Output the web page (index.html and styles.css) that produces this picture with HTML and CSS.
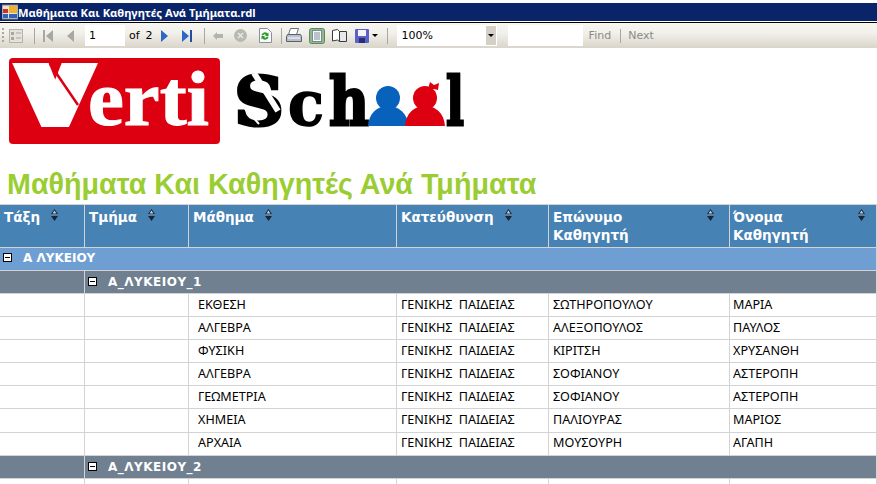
FILE: index.html
```html
<!DOCTYPE html>
<html lang="en">
<head>
    <meta charset="UTF-8">
    <title>Μαθήματα Και Καθηγητές Ανά Τμήματα</title>
    <link rel="stylesheet" href="styles.css">
</head>
<body>
<!-- window title -->
<div class="titlebar">
    <svg class="appicon" width="16" height="16" viewBox="0 0 16 16">
        <rect x="0" y="1" width="16" height="14" fill="#e8e4d8" stroke="#7a7a7a"/>
        <rect x="1" y="5" width="5" height="4" fill="#d03020"/>
        <rect x="1" y="10" width="5" height="4" fill="#3060c0"/>
        <rect x="7" y="2" width="8" height="7" fill="#f0b030"/>
        <rect x="7" y="10" width="8" height="4" fill="#3060c0"/>
    </svg>
    <span>Μαθήματα Και Καθηγητές Ανά Τμήματα.rdl</span>
</div>

<!-- report viewer toolbar -->
<div class="toolbar">
    <span class="grip"></span>
    <svg class="tool t-params" width="14" height="14" viewBox="0 0 14 14">
        <rect x="0.5" y="0.5" width="13" height="13" fill="#e4e2da" stroke="#b5b3a8"/>
        <rect x="2" y="3" width="3" height="3" fill="#a9a79c"/>
        <rect x="2" y="8" width="3" height="3" fill="#a9a79c"/>
        <path d="M7 4h5M7 9h5" stroke="#a9a79c"/>
    </svg>
    <span class="sep s1"></span>
    <svg class="tool t-first" width="10" height="12" viewBox="0 0 10 12"><rect x="0" y="0" width="2" height="12" fill="#a8a8a2"/><path d="M10 0v12L3 6z" fill="#a8a8a2"/></svg>
    <svg class="tool t-prev" width="9" height="12" viewBox="0 0 9 12"><path d="M8 0v12L1 6z" fill="#a8a8a2"/></svg>
    <span class="pagebox">1</span>
    <span class="of">of</span>
    <span class="total">2</span>
    <svg class="tool t-next" width="8" height="12" viewBox="0 0 8 12"><path d="M0 0v12l7-6z" fill="#2f68c4"/></svg>
    <svg class="tool t-last" width="10" height="12" viewBox="0 0 10 12"><path d="M0 0v12l7-6z" fill="#2f68c4"/><rect x="8" y="0" width="2" height="12" fill="#1f4fa0"/></svg>
    <span class="sep s2"></span>
    <svg class="tool t-back" width="10" height="8" viewBox="0 0 10 8"><path d="M0 4l4-4v2h6v4H4v2z" fill="#b4b4ae"/></svg>
    <svg class="tool t-stop" width="13" height="13" viewBox="0 0 13 13"><circle cx="6.5" cy="6.5" r="6.5" fill="#b9b9b3"/><path d="M4 4l5 5M9 4l-5 5" stroke="#e8e8e2" stroke-width="1.5"/></svg>
    <svg class="tool t-refresh" width="14" height="15" viewBox="0 0 14 15">
        <path d="M1.500.5h8l4 4v10h-12z" fill="#fbfbf6" stroke="#8290a8"/>
        <path d="M3.500 7a3.500 3.500 0 0 1 6-1.500l1-1v3.500H7l1-1a2 2 0 0 0-3 .5zM10.500 9a3.500 3.500 0 0 1-6 1.500l-1 1V8H7l-1 1a2 2 0 0 0 3-.5z" fill="#2c9a2c"/>
    </svg>
    <span class="sep s3"></span>
    <svg class="tool t-print" width="16" height="15" viewBox="0 0 16 15">
        <path d="M4.500.5h8l-2 6h-8z" fill="#fff" stroke="#68707c"/>
        <path d="M1.500 6.500h13l1 2v5h-15v-5z" fill="#b8c0cc" stroke="#58606c"/>
        <path d="M2 10h12" stroke="#fff"/>
    </svg>
    <svg class="tool t-layout" width="16" height="16" viewBox="0 0 16 16">
        <rect x="0.500" y="0.500" width="15" height="15" rx="2" fill="#8fb98a" stroke="#5c8a5c"/>
        <rect x="3.500" y="2.500" width="9" height="11" fill="#fafafa" stroke="#7a8a9a"/>
        <path d="M5 5h6M5 7h6M5 9h6M5 11h6" stroke="#7a8a9a"/>
    </svg>
    <svg class="tool t-setup" width="15" height="13" viewBox="0 0 15 13">
        <path d="M.5 1.500l5-1 2 2v10l-2-1.500-5 1z" fill="#fff" stroke="#3a3a3a"/>
        <path d="M7.500 2.500h7v10h-7z" fill="#e6e8ec" stroke="#3a3a3a"/>
    </svg>
    <svg class="tool t-save" width="14" height="14" viewBox="0 0 14 14">
        <rect x="0" y="0" width="14" height="14" rx="1" fill="#5a62c8"/>
        <rect x="3" y="1" width="8" height="6" fill="#f4f4fa"/>
        <rect x="4" y="9" width="6" height="5" fill="#2a2e70"/>
    </svg>
    <span class="caret"></span>
    <span class="sep s4"></span>
    <div class="zoombox"><span class="zoomval">100%</span><span class="zoomdrop"><span class="caret"></span></span></div>
    <span class="findbox"></span>
    <span class="find">Find</span>
    <span class="sep s5"></span>
    <span class="find">Next</span>
</div>

<!-- report body -->
<div class="logos">
    <svg class="logo-verti" width="211" height="87" viewBox="0 0 211 87">
        <rect x="0" y="0" width="211" height="86" rx="4" fill="#dc0011"/>
        <text class="logo-v" transform="translate(46 60) scale(1.38 1.12)" text-anchor="middle">V</text>
        <line x1="41" y1="6" x2="69" y2="47" stroke="#dc0011" stroke-width="2.5"/>
        <text class="logo-w" x="79" y="67" textLength="121" lengthAdjust="spacingAndGlyphs">erti</text>
    </svg>
    <svg class="logo-school" width="230" height="56" viewBox="0 0 230 56">
        <text class="logo-k" x="-2" y="52" textLength="50" lengthAdjust="spacingAndGlyphs">S</text>
        <line x1="18" y1="0" x2="42" y2="38" stroke="#fff" stroke-width="6"/>
        <line x1="1" y1="27" x2="23" y2="51" stroke="#fff" stroke-width="2"/>
        <text class="logo-s" x="52" y="52" textLength="36" lengthAdjust="spacingAndGlyphs">c</text>
        <text class="logo-k" x="93" y="52" textLength="40" lengthAdjust="spacingAndGlyphs">h</text>
        <circle cx="152" cy="25" r="12" fill="#0861bb"/>
        <path d="M132 53c1-13 9-20 20-20s19 7 21 20z" fill="#0861bb"/>
        <circle cx="189" cy="25" r="12" fill="#dc0011"/>
        <path d="M169 53c1-13 9-20 20-20s19 7 20 20z" fill="#dc0011"/>
        <path d="M192 16l2-7 4 3 5-2-1 7-4-1z" fill="#dc0011"/>
        <text class="logo-k" x="210" y="52" textLength="18" lengthAdjust="spacingAndGlyphs">l</text>
    </svg>
</div>

<h1 class="report-title">Μαθήματα Και Καθηγητές Ανά Τμήματα</h1>

<table class="tg">
    <colgroup>
        <col class="c1"><col class="c2"><col class="c3"><col class="c4"><col class="c5"><col class="c6">
    </colgroup>
    <thead>
    <tr>
        <th><div class="hd"><span>Τάξη</span><svg class="sort" width="7" height="12" viewBox="0 0 9 12" preserveAspectRatio="none"><path d="M4.500 0L9 5H0zM4.500 12L0 7h9z" fill="#1c2530"/><path d="M4.500 1.500L7 4.500H2z" fill="#c8d0d8"/></svg></div></th>
        <th><div class="hd"><span>Τμήμα</span><svg class="sort" width="7" height="12" viewBox="0 0 9 12" preserveAspectRatio="none"><path d="M4.500 0L9 5H0zM4.500 12L0 7h9z" fill="#1c2530"/><path d="M4.500 1.500L7 4.500H2z" fill="#c8d0d8"/></svg></div></th>
        <th><div class="hd"><span>Μάθημα</span><svg class="sort" width="7" height="12" viewBox="0 0 9 12" preserveAspectRatio="none"><path d="M4.500 0L9 5H0zM4.500 12L0 7h9z" fill="#1c2530"/><path d="M4.500 1.500L7 4.500H2z" fill="#c8d0d8"/></svg></div></th>
        <th><div class="hd"><span>Κατεύθυνση</span><svg class="sort" width="7" height="12" viewBox="0 0 9 12" preserveAspectRatio="none"><path d="M4.500 0L9 5H0zM4.500 12L0 7h9z" fill="#1c2530"/><path d="M4.500 1.500L7 4.500H2z" fill="#c8d0d8"/></svg></div></th>
        <th class="th-wide"><div class="hd hd-wide"><span>Επώνυμο<br>Καθηγητή</span><svg class="sort" width="7" height="12" viewBox="0 0 9 12" preserveAspectRatio="none"><path d="M4.500 0L9 5H0zM4.500 12L0 7h9z" fill="#1c2530"/><path d="M4.500 1.500L7 4.500H2z" fill="#c8d0d8"/></svg></div></th>
        <th class="th-last"><div class="hd hd-wide"><span>Όνομα<br>Καθηγητή</span><svg class="sort" width="7" height="12" viewBox="0 0 9 12" preserveAspectRatio="none"><path d="M4.500 0L9 5H0zM4.500 12L0 7h9z" fill="#1c2530"/><path d="M4.500 1.500L7 4.500H2z" fill="#c8d0d8"/></svg></div></th>
    </tr>
    </thead>
    <tbody>
    <tr class="grp1"><td colspan="6"><span class="tog"></span>Α ΛΥΚΕΙΟΥ</td></tr>
    <tr class="grp2"><td></td><td colspan="5"><span class="tog"></span>Α_ΛΥΚΕΙΟΥ_1</td></tr>
    <tr><td></td><td></td><td class="subj">ΕΚΘΕΣΗ</td><td>ΓΕΝΙΚΗΣ ΠΑΙΔΕΙΑΣ</td><td>ΣΩΤΗΡΟΠΟΥΛΟΥ</td><td>ΜΑΡΙΑ</td></tr>
    <tr><td></td><td></td><td class="subj">ΑΛΓΕΒΡΑ</td><td>ΓΕΝΙΚΗΣ ΠΑΙΔΕΙΑΣ</td><td>ΑΛΕΞΟΠΟΥΛΟΣ</td><td>ΠΑΥΛΟΣ</td></tr>
    <tr><td></td><td></td><td class="subj">ΦΥΣΙΚΗ</td><td>ΓΕΝΙΚΗΣ ΠΑΙΔΕΙΑΣ</td><td>ΚΙΡΙΤΣΗ</td><td>ΧΡΥΣΑΝΘΗ</td></tr>
    <tr><td></td><td></td><td class="subj">ΑΛΓΕΒΡΑ</td><td>ΓΕΝΙΚΗΣ ΠΑΙΔΕΙΑΣ</td><td>ΣΟΦΙΑΝΟΥ</td><td>ΑΣΤΕΡΟΠΗ</td></tr>
    <tr><td></td><td></td><td class="subj">ΓΕΩΜΕΤΡΙΑ</td><td>ΓΕΝΙΚΗΣ ΠΑΙΔΕΙΑΣ</td><td>ΣΟΦΙΑΝΟΥ</td><td>ΑΣΤΕΡΟΠΗ</td></tr>
    <tr class="row-tall"><td></td><td></td><td class="subj">ΧΗΜΕΙΑ</td><td>ΓΕΝΙΚΗΣ ΠΑΙΔΕΙΑΣ</td><td>ΠΑΛΙΟΥΡΑΣ</td><td>ΜΑΡΙΟΣ</td></tr>
    <tr class="row-up"><td></td><td></td><td class="subj">ΑΡΧΑΙΑ</td><td>ΓΕΝΙΚΗΣ ΠΑΙΔΕΙΑΣ</td><td>ΜΟΥΣΟΥΡΗ</td><td>ΑΓΑΠΗ</td></tr>
    <tr class="grp2"><td></td><td colspan="5"><span class="tog"></span>Α_ΛΥΚΕΙΟΥ_2</td></tr>
    <tr><td></td><td></td><td></td><td></td><td></td><td></td></tr>
    </tbody>
</table>
</body>
</html>
```

FILE: styles.css
```css
html, body {margin:0;padding:0;height:484px;overflow:hidden;background:#fff;}
body {font-family:"DejaVu Sans", sans-serif;}

/* title bar */
.titlebar {height:18px;margin-top:3px;background:#0a246a;color:#fff;display:flex;align-items:center;
    font-family:"Noto Sans", sans-serif;font-weight:bold;font-size:11.2px;gap:0;padding-left:2px;}
.titlebar span {white-space:nowrap;}

/* toolbar */
.toolbar {height:25px;margin-top:1px;border-top:1px solid #000;background:linear-gradient(#f7f6f2,#f2f0ea 40%,#d9d5cb);
    display:flex;align-items:center;font-size:11px;color:#000;}
.grip {width:2px;height:16px;margin-left:2px;background:repeating-linear-gradient(#a9a69a 0 2px,transparent 2px 4px);}
.tool {flex:none;}
.t-params {margin-left:5px;}
.sep {width:1px;height:16px;background:#a9a69a;flex:none;}
.s1 {margin-left:11px;}
.t-first {margin-left:8px;}
.t-prev {margin-left:13px;}
.pagebox {width:36px;height:21px;margin-left:10px;padding-left:4px;background:#fff;line-height:21px;font-size:11px;}
.of {margin-left:4px;}
.total {margin-left:6px;}
.t-next {margin-left:8px;}
.t-last {margin-left:13px;}
.s2 {margin-left:12px;}
.t-back {margin-left:8px;}
.t-stop {margin-left:11px;}
.t-refresh {margin-left:11px;}
.s3 {margin-left:9px;}
.t-print {margin-left:4px;}
.t-layout {margin-left:7px;}
.t-setup {margin-left:7px;}
.t-save {margin-left:8px;}
.caret {width:0;height:0;margin-left:3px;border:3px solid transparent;border-top-color:#000;border-bottom:0;flex:none;display:inline-block;}
.s4 {margin-left:9px;}
.zoombox {width:100px;height:21px;margin-left:9px;background:#fff;display:flex;justify-content:space-between;}
.zoomval {padding-left:5px;line-height:21px;}
.zoomdrop {width:10px;margin:1px;background:#d4d0c8;display:flex;align-items:center;justify-content:center;}
.zoomdrop .caret {margin:0;}
.findbox {width:75px;height:21px;margin-left:11px;background:#fff;}
.find {color:#8a8a86;margin-left:6px;}
.s5 {margin-left:9px;margin-right:1px;height:14px;}

/* logos */
.logos {height:110px;padding:10px 0 0 9px;display:flex;align-items:flex-start;gap:16px;box-sizing:border-box;}
.logos svg {overflow:visible;}
.logo-school {margin-top:15px;}
.logo-v {font:bold 60px "Liberation Sans", sans-serif;fill:#fff;stroke:#fff;stroke-width:16px;stroke-linejoin:miter;}
.logo-w {font:bold 78px "Liberation Serif", serif;fill:#fff;stroke:#fff;stroke-width:1px;}
.logo-k {font:bold 68px "DejaVu Serif", serif;fill:#000;stroke:#000;stroke-width:3px;}
.logo-s {font:bold 62px "DejaVu Serif", serif;fill:#000;stroke:#000;stroke-width:1.5px;}

.report-title {margin:0;padding:3px 0 0 7px;height:46px;line-height:46px;box-sizing:border-box;
    font-family:"Liberation Sans", sans-serif;font-weight:bold;font-size:28.7px;color:#9acd32;white-space:nowrap;}

/* table */
.tg {border-collapse:separate;border-spacing:0;table-layout:fixed;width:877px;border-top:1px solid #d3d3d3;}
.c1 {width:85px;}
.c2 {width:104px;}
.c3 {width:208px;}
.c4 {width:152px;}
.c5 {width:181px;}
.c6 {width:147px;}
.tg th, .tg td {padding:0;border-right:1px solid #d3d3d3;border-bottom:1px solid #d3d3d3;box-sizing:border-box;}
.tg th {height:43px;background:#4682b4;color:#fff;font-family:"DejaVu Sans", sans-serif;font-size:13.5px;font-weight:bold;
    text-align:left;vertical-align:top;padding:3px 14px 0 4px;line-height:18px;}
.tg th.th-wide {padding-right:15px;}
.tg th.th-last {padding-right:11px;padding-left:3px;}
.tg td {height:23px;font-family:"Noto Sans", sans-serif;font-size:12.6px;word-spacing:3px;color:#000;padding:0 0 2px 4px;white-space:nowrap;}
.tg td:last-child {padding-left:3px;}
.tg td.subj {padding-left:9px;}
.tg .row-tall td {height:24px;}
.tg .row-up td {padding-bottom:4px;}
.hd {display:flex;gap:11px;align-items:flex-start;}
.hd-wide {justify-content:space-between;}
.sort {flex:none;margin-top:1px;}
.tg .grp1 td {background:#6f9fd2;color:#fff;font-family:"DejaVu Sans", sans-serif;font-weight:bold;font-size:12px;word-spacing:0;padding-left:3px;}
.tg .grp2 td {background:#708090;color:#fff;font-family:"DejaVu Sans", sans-serif;font-weight:bold;font-size:12px;word-spacing:0;letter-spacing:.5px;padding:0 0 0 3px;}
.tog {display:inline-block;width:7px;height:7px;border:1px solid #000;background:#fff linear-gradient(#000,#000) center/5px 1px no-repeat;
    margin-right:11px;vertical-align:0;}
```
